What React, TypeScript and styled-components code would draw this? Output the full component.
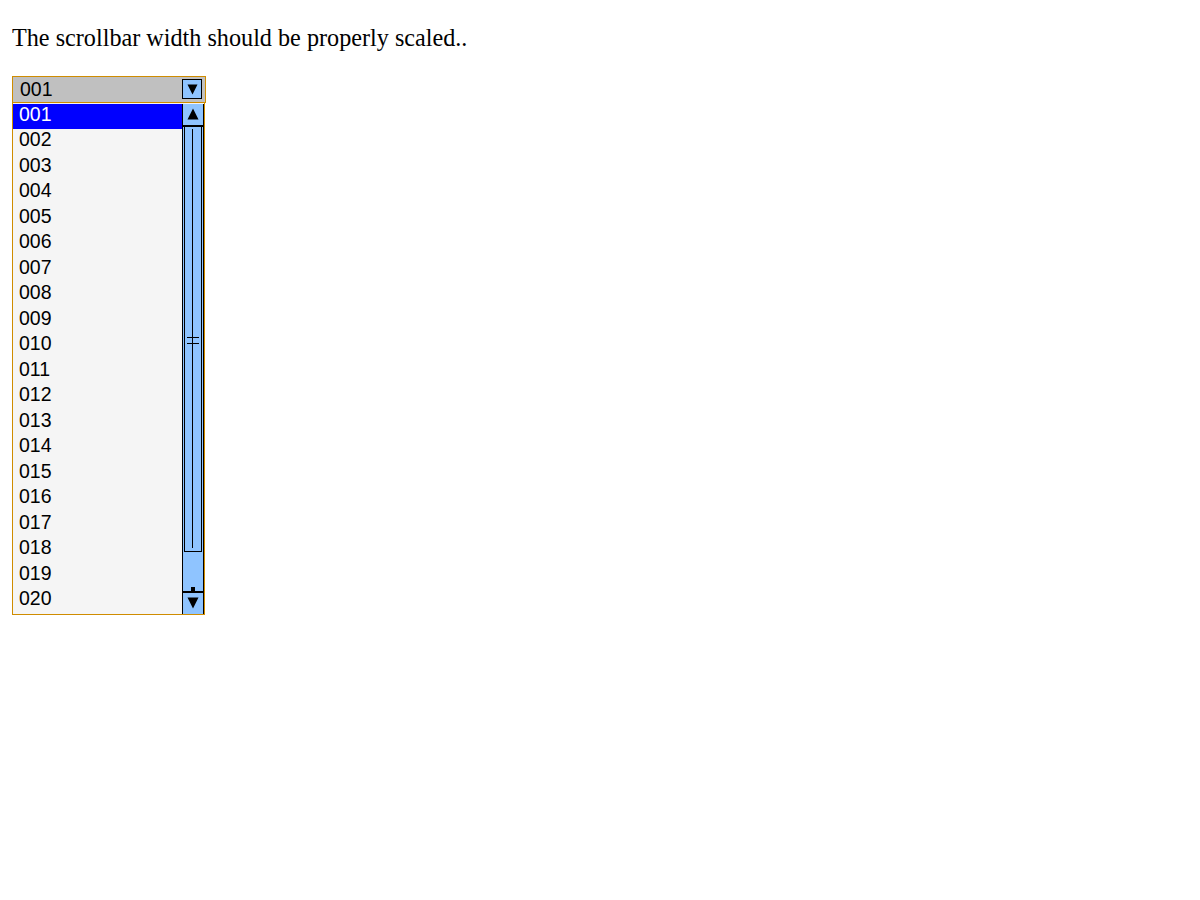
import React from "react";
import styled, { createGlobalStyle } from "styled-components";

const Global = createGlobalStyle`
  html, body { margin: 0; padding: 0; background: #ffffff; }
  body { margin: 12px; font-family: "Liberation Serif", "Times New Roman", serif; color: #000; }
`;

const Intro = styled.p`
  font-size: 24.2px;
  line-height: 27.6px;
  margin: 12px 0 24px 0;
`;

const SelectWrap = styled.div`
  width: 194px;
  font-family: "Liberation Sans", Arial, sans-serif;
  font-size: 19.5px;
`;

const Header = styled.div`
  box-sizing: border-box;
  height: 27px;
  width: 194px;
  border: 1px solid #cf8c00;
  background: #c0c0c0;
  display: flex;
  align-items: center;
  justify-content: space-between;
  padding: 0 3px 0 7px;
`;

const HeaderText = styled.span`
  line-height: 25px;
  color: #000;
`;

const ArrowButton = styled.div<{ $h: number }>`
  box-sizing: border-box;
  width: 20px;
  height: ${(p) => p.$h}px;
  border: 1px solid #000;
  background: #8fc4ff;
  display: flex;
  align-items: center;
  justify-content: center;
`;

const Dropdown = styled.div`
  box-sizing: border-box;
  width: 193px;
  height: 512px;
  border: 1px solid #cf8c00;
  border-top: none;
  display: flex;
  background: #f5f5f5;
`;

const List = styled.div`
  flex: 1;
  display: flex;
  flex-direction: column;
  padding-top: 1px;
`;

const Option = styled.div<{ $selected?: boolean }>`
  box-sizing: border-box;
  height: 25.5px;
  line-height: 21.5px;
  padding-left: 6px;
  background: ${(p) => (p.$selected ? "#0000ff" : "transparent")};
  color: ${(p) => (p.$selected ? "#ffffff" : "#000000")};
`;

const Scrollbar = styled.div`
  box-sizing: border-box;
  width: 22px;
  margin-top: 1px;
  border-left: 1px solid #000;
  border-right: 1px solid #000;
  background: #8fc4ff;
  display: flex;
  flex-direction: column;
`;

const ScrollButton = styled.div<{ $h: number; $top?: boolean }>`
  box-sizing: border-box;
  height: ${(p) => p.$h}px;
  flex: none;
  display: flex;
  align-items: center;
  justify-content: center;
  border-bottom: ${(p) => (p.$top ? "2px solid #000" : "none")};
  border-top: ${(p) => (p.$top ? "none" : "2px solid #000")};
`;

const Thumb = styled.div`
  box-sizing: border-box;
  height: 425px;
  margin: 0 1px;
  border: 1px solid #000;
  border-top: none;
  position: relative;
`;

const ThumbLine = styled.div`
  position: absolute;
  top: 2px;
  bottom: 3px;
  left: 50%;
  width: 1px;
  margin-left: -1px;
  background: #000;
`;

const Grip = styled.div`
  position: absolute;
  left: 2px;
  right: 2px;
  height: 1px;
  background: #000;
`;

const Track = styled.div`
  flex: 1;
  display: flex;
  justify-content: center;
  align-items: flex-end;
`;

const Tick = styled.div`
  width: 4px;
  height: 4px;
  margin-left: -1px;
  background: #000;
`;

const Triangle = ({ up }: { up?: boolean }) => (
  <svg width="12" height="12" viewBox="0 0 12 12">
    {up ? (
      <polygon points="6,0.5 11.5,11.5 0.5,11.5" fill="#000" />
    ) : (
      <polygon points="0.5,0.5 11.5,0.5 6,11.5" fill="#000" />
    )}
  </svg>
);

const SmallTriangle = () => (
  <svg width="11" height="11" viewBox="0 0 11 11">
    <polygon points="0.5,0.5 10.5,0.5 5.5,10.5" fill="#000" />
  </svg>
);

const items = Array.from({ length: 20 }, (_, i) => String(i + 1).padStart(3, "0"));

export default function App() {
  return (
    <>
      <Global />
      <Intro>The scrollbar width should be properly scaled..</Intro>
      <SelectWrap>
        <Header>
          <HeaderText>001</HeaderText>
          <ArrowButton $h={20}>
            <SmallTriangle />
          </ArrowButton>
        </Header>
        <Dropdown>
          <List>
            {items.map((it, i) => (
              <Option key={it} $selected={i === 0}>
                {it}
              </Option>
            ))}
          </List>
          <Scrollbar>
            <ScrollButton $h={23} $top>
              <Triangle up />
            </ScrollButton>
            <Thumb>
              <ThumbLine />
              <Grip style={{ top: "210px" }} />
              <Grip style={{ top: "216px" }} />
            </Thumb>
            <Track>
              <Tick />
            </Track>
            <ScrollButton $h={23}>
              <Triangle />
            </ScrollButton>
          </Scrollbar>
        </Dropdown>
      </SelectWrap>
    </>
  );
}
